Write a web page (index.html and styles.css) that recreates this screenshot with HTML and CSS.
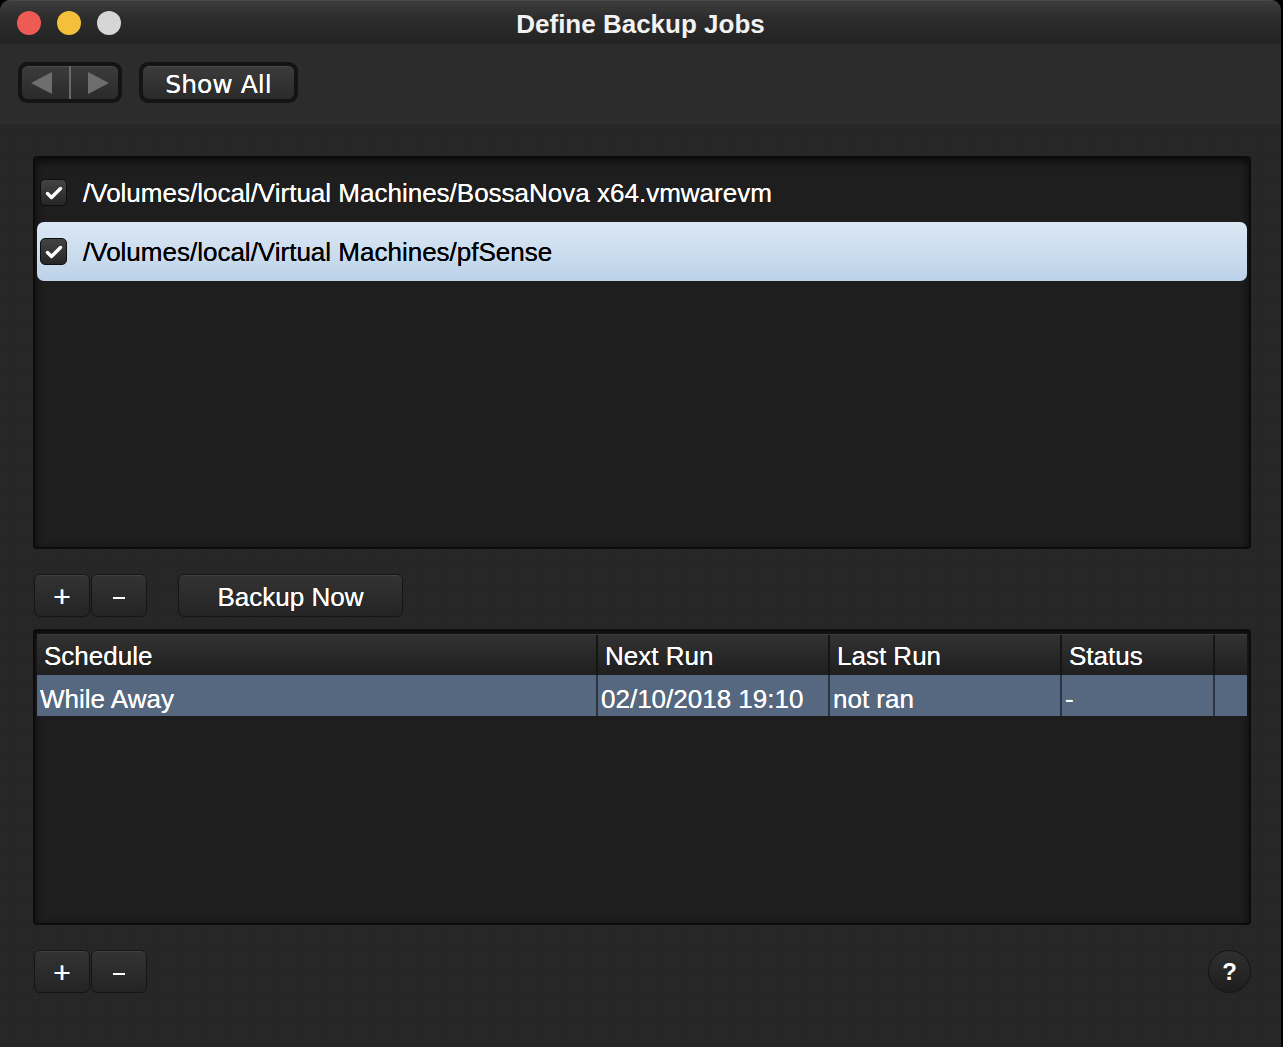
FILE: index.html
```html
<!DOCTYPE html>
<html lang="en">
<head>
  <meta charset="UTF-8">
  <title>Define Backup Jobs</title>
  <link rel="stylesheet" href="styles.css">
</head>
<body>
  <div class="window">
    <div class="titlebar">
      <div class="lights">
        <span class="light red"></span>
        <span class="light yellow"></span>
        <span class="light gray"></span>
      </div>
      <div class="title">Define Backup Jobs</div>
      <div></div>
    </div>

    <div class="toolbar">
      <div class="well">
        <div class="nav">
          <span class="arrow left"></span>
          <span class="nav-sep"></span>
          <span class="arrow right"></span>
        </div>
      </div>
      <div class="well">
        <button class="tb-btn">Show All</button>
      </div>
    </div>

    <div class="content">
      <div class="job-list">
        <div class="job">
          <span class="check"><svg width="18" height="14" viewBox="0 0 18 14"><path d="M2.5 7.5 L6.5 11.5 L15.5 2.5" fill="none" stroke="#fff" stroke-width="3.4" stroke-linecap="round" stroke-linejoin="round"/></svg></span>
          <span class="job-path">/Volumes/local/Virtual Machines/BossaNova x64.vmwarevm</span>
        </div>
        <div class="job selected">
          <span class="check"><svg width="18" height="14" viewBox="0 0 18 14"><path d="M2.5 7.5 L6.5 11.5 L15.5 2.5" fill="none" stroke="#fff" stroke-width="3.4" stroke-linecap="round" stroke-linejoin="round"/></svg></span>
          <span class="job-path">/Volumes/local/Virtual Machines/pfSense</span>
        </div>
      </div>

      <div class="actions">
        <div class="pm">
          <button class="btn sq">+</button>
          <button class="btn sq"><span class="dash"></span></button>
        </div>
        <button class="btn backup">Backup Now</button>
      </div>

      <div class="schedules">
        <div class="thead">
          <div class="cell c1">Schedule</div>
          <div class="cell c2">Next Run</div>
          <div class="cell c3">Last Run</div>
          <div class="cell c4">Status</div>
          <div class="cell c5"></div>
        </div>
        <div class="trow">
          <div class="cell c1">While Away</div>
          <div class="cell c2">02/10/2018 19:10</div>
          <div class="cell c3">not ran</div>
          <div class="cell c4">-</div>
          <div class="cell c5"></div>
        </div>
      </div>

      <div class="footer">
        <div class="pm">
          <button class="btn sq">+</button>
          <button class="btn sq"><span class="dash"></span></button>
        </div>
        <button class="help">?</button>
      </div>
    </div>
  </div>
</body>
</html>
```

FILE: styles.css
```css
body {
  margin: 0;
  background: #000;
  font-family: "Liberation Sans", Arial, sans-serif;
  color: #fff;
}
.window {
  width: 1281px;
  height: 1047px;
  border-radius: 10px 10px 0 0;
  overflow: hidden;
  background: #262626;
  background-image: radial-gradient(rgba(255,255,255,0.025) 1px, transparent 1px);
  background-size: 3px 3px;
  display: flex;
  flex-direction: column;
}
.titlebar {
  height: 44px;
  flex: none;
  display: grid;
  grid-template-columns: 1fr auto 1fr;
  align-items: center;
  background: linear-gradient(#3d3d3d, #2c2c2c 40%, #232323);
  border-top: 1px solid #4a4a4a;
  box-sizing: border-box;
}
.lights {
  display: flex;
  gap: 16px;
  padding-left: 17px;
  padding-top: 1px;
}
.light {
  width: 24px;
  height: 24px;
  border-radius: 50%;
}
.light.red { background: #ee5b55; }
.light.yellow { background: #f4c03c; }
.light.gray { background: #d6d6d6; }
.title {
  font-weight: bold;
  font-size: 26px;
  color: #f2f2f2;
  padding-top: 4px;
}
.toolbar {
  height: 80px;
  flex: none;
  box-sizing: border-box;
  display: flex;
  align-items: flex-start;
  gap: 17px;
  padding: 18px 0 0 18px;
  background: #2c2c2c;
  border-bottom: 1px solid #2f2f2f;
}
.well {
  background: #141414;
  border-radius: 9px;
  padding: 4px;
}
.nav {
  width: 96px;
  height: 33px;
  border-radius: 6px;
  background: linear-gradient(#3c3c3c, #2a2a2a);
  box-shadow: inset 0 1px 0 rgba(255,255,255,0.08);
  display: flex;
  align-items: center;
  justify-content: space-around;
}
.nav-sep {
  width: 2px;
  height: 33px;
  background: #6a6a6a;
}
.arrow {
  width: 0;
  height: 0;
  border-top: 11px solid transparent;
  border-bottom: 11px solid transparent;
}
.arrow.left { border-right: 21px solid #6e6e6e; }
.arrow.right { border-left: 21px solid #6e6e6e; }
.tb-btn {
  display: block;
  width: 151px;
  height: 33px;
  border: none;
  border-radius: 6px;
  background: linear-gradient(#3c3c3c, #2a2a2a);
  box-shadow: inset 0 1px 0 rgba(255,255,255,0.08);
  color: #fff;
  font-family: "DejaVu Sans", sans-serif;
  font-size: 25px;
  padding: 2px 0 0;
  line-height: 33px;
  text-shadow: 0 0 0.5px #fff;
}
.content {
  flex: 1;
  padding: 32px 30px 0 33px;
  display: flex;
  flex-direction: column;
}
.job-list {
  height: 393px;
  box-sizing: border-box;
  border: 2px solid #0c0c0c;
  border-radius: 4px;
  background: #1e1e1e;
  box-shadow: inset 0 3px 8px rgba(0,0,0,0.7);
  padding: 5px 2px;
}
.job {
  height: 59px;
  display: flex;
  align-items: center;
  gap: 16px;
  padding-left: 3px;
  font-size: 26px;
  color: #fff;
  text-shadow: 0 0 0.5px currentColor;
}
.job.selected {
  background: linear-gradient(#dce8f5, #bcd2e9);
  border-radius: 7px;
  color: #000;
}
.job-path { padding-top: 2px; }
.check {
  width: 25px;
  height: 25px;
  border: 1px solid #0e0e0e;
  border-radius: 5px;
  background: linear-gradient(#444, #262626);
  display: flex;
  align-items: center;
  justify-content: center;
}
.actions {
  display: flex;
  gap: 31px;
  margin-top: 25px;
  margin-left: 1px;
}
.pm {
  display: flex;
  gap: 1px;
}
.btn {
  height: 43px;
  border: 1px solid #151515;
  border-radius: 6px;
  background: linear-gradient(#333, #242424);
  box-shadow: inset 0 1px 0 rgba(255,255,255,0.07);
  color: #fff;
  font-family: "Liberation Sans", Arial, sans-serif;
  font-size: 26px;
  padding: 3px 0 0;
  text-shadow: 0 0 0.5px #fff;
}
.btn.sq {
  width: 56px;
  font-size: 30px;
  line-height: 36px;
  display: flex;
  align-items: center;
  justify-content: center;
}
.dash {
  width: 12px;
  height: 2px;
  background: #fff;
  margin-top: 2px;
}
.btn.backup {
  width: 225px;
}
.schedules {
  margin-top: 12px;
  height: 296px;
  box-sizing: border-box;
  border: 2px solid #0c0c0c;
  border-radius: 4px;
  background: #1e1e1e;
  box-shadow: inset 0 3px 8px rgba(0,0,0,0.7);
  padding: 3px 2px;
}
.thead, .trow {
  display: flex;
  font-size: 26px;
  text-shadow: 0 0 0.5px #fff;
}
.thead {
  height: 41px;
  background: linear-gradient(#323232, #1f1f1f);
  border-top: 1px solid #3c3c3c;
  box-sizing: border-box;
}
.trow {
  height: 41px;
  background: #566880;
}
.cell {
  box-sizing: border-box;
  border-right: 2px solid #151515;
  display: flex;
  align-items: center;
  white-space: nowrap;
}
.thead .cell { padding-left: 7px; padding-top: 2px; }
.trow .cell { padding-left: 3px; padding-top: 8px; border-right-color: #2b3442; }
.c1 { width: 561px; }
.c2 { width: 232px; }
.c3 { width: 232px; }
.c4 { width: 153px; }
.c5 { flex: 1; border-right: none; }
.footer {
  margin-top: 25px;
  margin-left: 1px;
  display: flex;
  justify-content: space-between;
  align-items: flex-start;
}
.help {
  width: 43px;
  height: 43px;
  border-radius: 50%;
  border: 1px solid #141414;
  background: linear-gradient(#303030, #1d1d1d);
  color: #fff;
  font-family: "Liberation Sans", Arial, sans-serif;
  font-weight: bold;
  font-size: 24px;
  padding: 0;
  margin-right: 0;
}
```
